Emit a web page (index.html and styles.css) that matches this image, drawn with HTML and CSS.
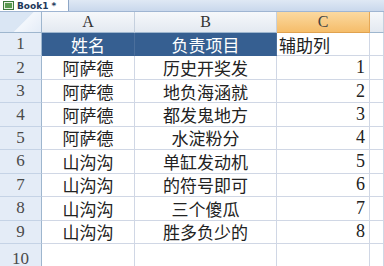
FILE: index.html
```html
<!DOCTYPE html>
<html lang="zh-CN">
<head>
    <meta charset="UTF-8">
    <title>Book1</title>
    <link rel="stylesheet" href="styles.css">
</head>
<body>
    <div class="tabbar">
        <div class="tab">
            <svg class="xl-icon" width="11" height="9" viewBox="0 0 11 9">
                <rect x="0.5" y="0.5" width="10" height="8" fill="#e8f0e0" stroke="#3c7a3c"/>
                <rect x="2" y="2" width="7" height="5" fill="#5a9a50"/>
            </svg>
            <span class="tab-name">Book1 *</span>
        </div>
    </div>

    <div class="sheet">
        <div class="corner"></div>
        <div class="col-head">A</div>
        <div class="col-head">B</div>
        <div class="col-head selected">C</div>
        <div class="col-head"></div>

        <div class="row-head">1</div>
        <div class="cell title">姓名</div>
        <div class="cell title">负责项目</div>
        <div class="cell left">辅助列</div>
        <div class="cell"></div>

        <div class="row-head">2</div>
        <div class="cell">阿萨德</div>
        <div class="cell">历史开奖发</div>
        <div class="cell num">1</div>
        <div class="cell"></div>

        <div class="row-head">3</div>
        <div class="cell">阿萨德</div>
        <div class="cell">地负海涵就</div>
        <div class="cell num">2</div>
        <div class="cell"></div>

        <div class="row-head">4</div>
        <div class="cell">阿萨德</div>
        <div class="cell">都发鬼地方</div>
        <div class="cell num">3</div>
        <div class="cell"></div>

        <div class="row-head">5</div>
        <div class="cell">阿萨德</div>
        <div class="cell">水淀粉分</div>
        <div class="cell num">4</div>
        <div class="cell"></div>

        <div class="row-head">6</div>
        <div class="cell">山沟沟</div>
        <div class="cell">单缸发动机</div>
        <div class="cell num">5</div>
        <div class="cell"></div>

        <div class="row-head">7</div>
        <div class="cell">山沟沟</div>
        <div class="cell">的符号即可</div>
        <div class="cell num">6</div>
        <div class="cell"></div>

        <div class="row-head">8</div>
        <div class="cell">山沟沟</div>
        <div class="cell">三个傻瓜</div>
        <div class="cell num">7</div>
        <div class="cell"></div>

        <div class="row-head">9</div>
        <div class="cell">山沟沟</div>
        <div class="cell">胜多负少的</div>
        <div class="cell num">8</div>
        <div class="cell"></div>

        <div class="row-head">10</div>
        <div class="cell"></div>
        <div class="cell"></div>
        <div class="cell"></div>
        <div class="cell"></div>
    </div>
</body>
</html>
```

FILE: styles.css
```css
* {
    box-sizing: border-box;
}

body {
    margin: 0;
    width: 384px;
    height: 266px;
    overflow: hidden;
    background: #fff;
    font-family: "Liberation Serif", "Noto Sans CJK SC", serif;
}

.tabbar {
    height: 12px;
    background: linear-gradient(#dfe8f4, #c9d8ec);
    border-bottom: 1px solid #9fb5d2;
    display: flex;
    align-items: flex-end;
    overflow: hidden;
}

.tab {
    width: 69px;
    height: 11px;
    background: #fff;
    border-right: 1px solid #8ea6c6;
    display: flex;
    align-items: flex-end;
    gap: 3px;
    padding-left: 3px;
    overflow: hidden;
}

.xl-icon {
    flex: none;
    margin-bottom: 1px;
}

.tab-name {
    font-family: "DejaVu Sans", sans-serif;
    font-weight: bold;
    font-size: 9px;
    line-height: 10px;
    color: #1e395b;
}

.sheet {
    display: grid;
    grid-template-columns: 42px 93px 142px 93px 14px;
    grid-template-rows: 21px repeat(9, 23.45px) 32px;
}

.corner {
    background: linear-gradient(135deg, #dae6f4 55%, #f3f7fc 56%, #e4ecf7);
    border-right: 1px solid #9eb6ce;
    border-bottom: 1px solid #9eb6ce;
}

.col-head {
    background: linear-gradient(#f6f8fb, #e3e9f1);
    border-right: 1px solid #c5d0de;
    border-bottom: 1px solid #9eb6ce;
    color: #333;
    font-size: 16px;
    display: flex;
    align-items: center;
    justify-content: center;
}

.col-head.selected {
    background: linear-gradient(#fbd9a0, #f5bd6a);
    border-right-color: #e6a856;
    border-bottom-color: #e0a24f;
    color: #444;
}

.row-head {
    background: #e4ecf7;
    border-right: 1px solid #9eb6ce;
    border-bottom: 1px solid #c5d3e6;
    color: #4a4a4a;
    font-size: 17px;
    display: flex;
    align-items: center;
    justify-content: center;
}

.cell {
    border-right: 1px solid #d0d7e5;
    border-bottom: 1px solid #d0d7e5;
    color: #222;
    font-size: 17px;
    display: flex;
    align-items: center;
    justify-content: center;
    white-space: nowrap;
    overflow: hidden;
}

.cell.title {
    background: #365f91;
    border-color: #365f91;
    border-right-color: #4b6f9c;
    color: #fff;
}

.cell.left {
    justify-content: flex-start;
    padding-left: 2px;
}

.cell.num {
    justify-content: flex-end;
    padding-right: 4px;
    font-size: 18px;
}
```
